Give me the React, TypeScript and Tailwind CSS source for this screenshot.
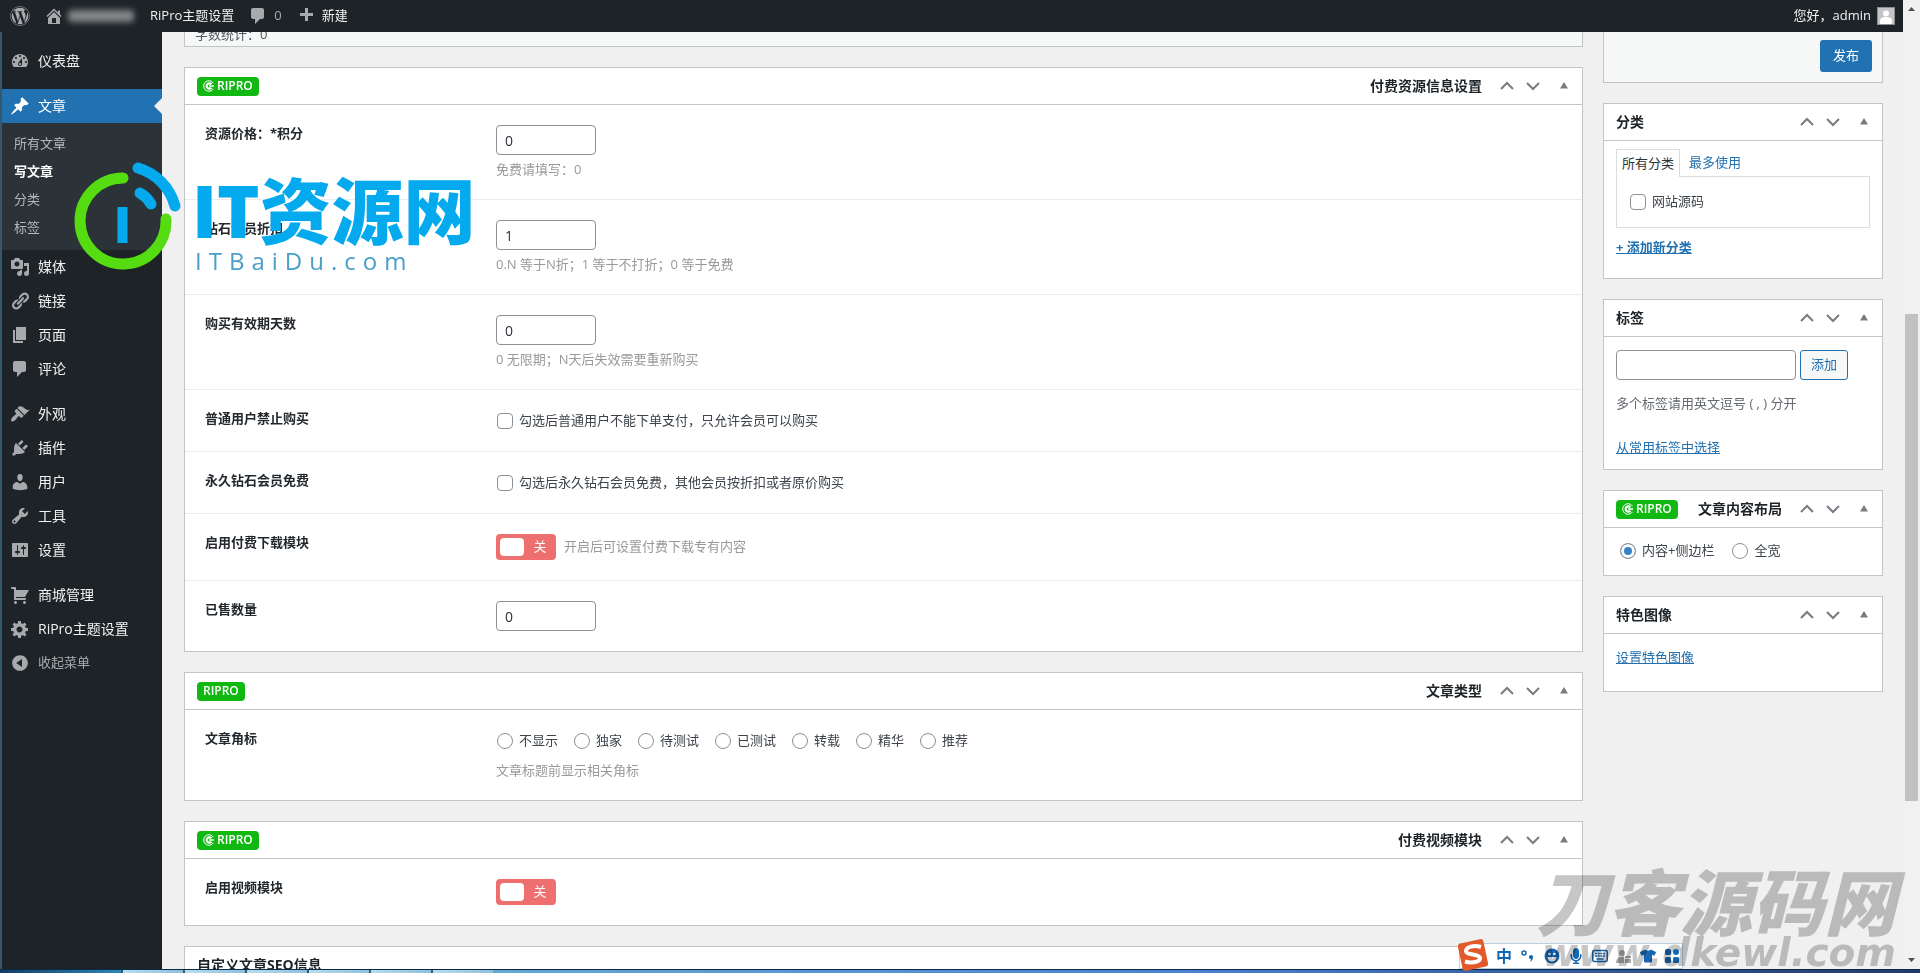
import type { ReactNode } from "react";
import { FaMicrophone, FaTshirt, FaWordpress } from "react-icons/fa";

const icons = {
  dashboard:
    "M3.76 16h12.48c1.1-1.37 1.76-3.11 1.76-5 0-4.42-3.58-8-8-8s-8 3.58-8 8c0 1.89.66 3.63 1.76 5zM10 4c.55 0 1 .45 1 1s-.45 1-1 1-1-.45-1-1 .45-1 1-1zM6 6c.55 0 1 .45 1 1s-.45 1-1 1-1-.45-1-1 .45-1 1-1zm8 0c.55 0 1 .45 1 1s-.45 1-1 1-1-.45-1-1 .45-1 1-1zm-5.37 5.55L12 7v6c0 1.1-.9 2-2 2s-2-.9-2-2c0-.57.24-1.08.63-1.45zM4 10c.55 0 1 .45 1 1s-.45 1-1 1-1-.45-1-1 .45-1 1-1zm12 0c.55 0 1 .45 1 1s-.45 1-1 1-1-.45-1-1 .45-1 1-1zm-5 3c0-.55-.45-1-1-1s-1 .45-1 1 .45 1 1 1 1-.45 1-1z",
  post: "M10.44 3.02l1.82-1.82 6.36 6.35-1.83 1.82c-1.05-.68-2.48-.57-3.41.36l-.75.75c-.92.93-1.04 2.35-.35 3.41l-1.83 1.82-2.41-2.41-2.8 2.79c-.42.42-3.38 2.71-3.8 2.29s1.86-3.39 2.28-3.81l2.79-2.79L4.1 9.36l1.83-1.82c1.05.69 2.48.57 3.4-.36l.75-.75c.93-.92 1.05-2.35.36-3.41z",
  media:
    "M13 11V4c0-.55-.45-1-1-1h-1.67L9 1H5L3.67 3H2c-.55 0-1 .45-1 1v7c0 .55.45 1 1 1h10c.55 0 1-.45 1-1zM7 4.5c1.38 0 2.5 1.12 2.5 2.5S8.38 9.5 7 9.5 4.5 8.38 4.5 7 5.62 4.5 7 4.5zM14 6h5v10.5c0 1.38-1.12 2.5-2.5 2.5S14 17.88 14 16.5s1.12-2.5 2.5-2.5c.17 0 .34.02.5.05V9h-3V6zm-4 8.05V13h2v3.5c0 1.38-1.12 2.5-2.5 2.5S7 17.88 7 16.5 8.12 14 9.5 14c.17 0 .34.02.5.05z",
  links:
    "M17.74 2.76c1.68 1.69 1.68 4.41 0 6.1l-1.53 1.52c-1.12 1.12-2.7 1.47-4.14 1.09l2.62-2.61.76-.77.76-.76c.84-.84.84-2.2 0-3.04-.84-.85-2.2-.85-3.04 0l-.77.76-3.38 3.38c-.37-1.44-.02-3.02 1.1-4.14l1.52-1.53c1.69-1.68 4.42-1.68 6.1 0zM8.59 13.43l5.34-5.34c.42-.42.42-1.1 0-1.52-.44-.43-1.13-.39-1.53 0l-5.33 5.34c-.42.42-.42 1.1 0 1.52.44.43 1.13.39 1.52 0zm-.76 2.29l4.14-4.15c.38 1.44.03 3.02-1.09 4.14l-1.52 1.53c-1.69 1.68-4.41 1.68-6.1 0-1.68-1.68-1.68-4.42 0-6.1l1.53-1.52c1.12-1.12 2.7-1.47 4.14-1.1l-4.14 4.15c-.85.84-.85 2.2 0 3.05.84.84 2.2.84 3.04 0z",
  page: "M6 15V2h10v13H6zm-1 1h8v2H3V5h2v11z",
  comments:
    "M5 2h9c1.1 0 2 .9 2 2v7c0 1.1-.9 2-2 2h-2l-5 5v-5H5c-1.1 0-2-.9-2-2V4c0-1.1.9-2 2-2z",
  appearance:
    "M14.48 11.06L7.41 3.99l1.5-1.5c.5-.56 2.3-.47 3.51.32 1.21.8 1.43 1.28 2.91 2.1 1.18.64 2.45 1.26 4.45.85zm-.71.71L6.7 4.7 4.93 6.47c-.39.39-.39 1.02 0 1.41l1.06 1.06c.39.39.39 1.03 0 1.42-.6.6-1.43 1.11-2.21 1.69-.35.26-.7.53-1.01.84C1.43 14.23.4 16.08 1.4 17.07c.99 1 2.84-.03 4.18-1.36.31-.31.58-.66.85-1.02.57-.78 1.08-1.61 1.69-2.21.39-.39 1.02-.39 1.41 0l1.06 1.06c.39.39 1.02.39 1.41 0z",
  plugins:
    "M13.11 4.36L9.87 7.6 8 5.73l3.24-3.24c.35-.34 1.05-.2 1.56.32.52.51.66 1.21.31 1.55zm-8 1.77l.91-1.12 9.01 9.01-1.19.84c-.71.71-2.63 1.16-3.82 1.16H6.14L4.9 17.26c-.59.59-1.54.59-2.12 0-.59-.58-.59-1.53 0-2.12l1.24-1.24v-3.88c0-1.13.4-3.19 1.09-3.89zm7.26 3.97l3.24-3.24c.34-.35 1.04-.21 1.55.31.52.51.66 1.21.31 1.55l-3.24 3.25z",
  users:
    "M10 9.25c-2.27 0-2.73-3.44-2.73-3.44C7 4.02 7.82 2 9.97 2c2.16 0 2.98 2.02 2.71 3.81 0 0-.41 3.44-2.68 3.44zm0 2.57L12.72 10c2.39 0 4.52 2.33 4.52 4.53v2.49s-3.65 1.13-7.24 1.13c-3.65 0-7.24-1.13-7.24-1.13v-2.49c0-2.25 1.94-4.48 4.47-4.48z",
  tools:
    "M16.68 9.77c-1.34 1.34-3.3 1.67-4.95.99l-5.41 6.52c-.99.99-2.59.99-3.58 0s-.99-2.59 0-3.57l6.52-5.42c-.68-1.65-.35-3.61.99-4.95 1.28-1.28 3.12-1.62 4.72-1.06l-2.89 2.89 2.82 2.82 2.86-2.87c.53 1.58.18 3.39-1.08 4.65zM3.81 16.21c.4.39 1.04.39 1.43 0 .4-.4.4-1.04 0-1.43-.39-.4-1.03-.4-1.43 0-.39.39-.39 1.03 0 1.43z",
  settings:
    "M18 16V4c0-.55-.45-1-1-1H3c-.55 0-1 .45-1 1v12c0 .55.45 1 1 1h14c.55 0 1-.45 1-1zM8 11h1c.55 0 1 .45 1 1s-.45 1-1 1H8v1.5c0 .28-.22.5-.5.5s-.5-.22-.5-.5V13H6c-.55 0-1-.45-1-1s.45-1 1-1h1V5.5c0-.28.22-.5.5-.5s.5.22.5.5V11zm5-2h-1c-.55 0-1-.45-1-1s.45-1 1-1h1V5.5c0-.28.22-.5.5-.5s.5.22.5.5V7h1c.55 0 1 .45 1 1s-.45 1-1 1h-1v5.5c0 .28-.22.5-.5.5s-.5-.22-.5-.5V9z",
  cart: "M6 13h9c.55 0 1 .45 1 1s-.45 1-1 1H5c-.55 0-1-.45-1-1V4H2c-.55 0-1-.45-1-1s.45-1 1-1h3c.55 0 1 .45 1 1v2h13l-4 7H6v1zm-.5 3c.83 0 1.5.67 1.5 1.5S6.33 19 5.5 19 4 18.33 4 17.5 4.67 16 5.5 16zm9 0c.83 0 1.5.67 1.5 1.5s-.67 1.5-1.5 1.5-1.5-.67-1.5-1.5.67-1.5 1.5-1.5z",
  generic:
    "M18 12h-2.18c-.17.7-.44 1.35-.81 1.93l1.54 1.54-2.1 2.1-1.54-1.54c-.58.36-1.23.63-1.91.79V19H8v-2.18c-.68-.16-1.33-.43-1.91-.79l-1.54 1.54-2.12-2.12 1.54-1.54c-.36-.58-.63-1.23-.79-1.91H1V9.03h2.17c.16-.7.44-1.35.8-1.94L2.43 5.55l2.1-2.1 1.54 1.54c.58-.37 1.24-.64 1.93-.81V2h3v2.18c.68.16 1.33.43 1.91.79l1.54-1.54 2.12 2.12-1.54 1.54c.36.59.64 1.24.8 1.94H18V12zm-8.5 1.5c1.66 0 3-1.34 3-3s-1.34-3-3-3-3 1.34-3 3 1.34 3 3 3z",
  collapse:
    "M10 2.16c4.33 0 7.84 3.51 7.84 7.84s-3.51 7.84-7.84 7.84S2.16 14.33 2.16 10 5.71 2.16 10 2.16zm2 11.72V6.12L6.18 9.97z",
  home: "M16 8.5l1.53 1.53-1.06 1.06L10 4.6l-6.47 6.49-1.06-1.06L10 2.5l4 4v-2h2v4zm-6-2.46l6 5.99V18H4v-5.97zM12 17v-5H8v5h4z",
  plus: "M17 7v3h-5v5H9v-5H4V7h5V2h3v5h5z",
};

type IconName = keyof typeof icons;

function Icon({ name, className = "text-[#a7aaad]" }: { name: IconName; className?: string }) {
  return (
    <svg
      aria-hidden="true"
      className={["size-5 shrink-0", className].join(" ")}
      fill="currentColor"
      fillRule="evenodd"
      viewBox="0 0 20 20"
    >
      <path d={icons[name]} />
    </svg>
  );
}

type MenuEntry = { icon: IconName; label: string };

const menuGroups: MenuEntry[][] = [
  [
    { icon: "media", label: "媒体" },
    { icon: "links", label: "链接" },
    { icon: "page", label: "页面" },
    { icon: "comments", label: "评论" },
  ],
  [
    { icon: "appearance", label: "外观" },
    { icon: "plugins", label: "插件" },
    { icon: "users", label: "用户" },
    { icon: "tools", label: "工具" },
    { icon: "settings", label: "设置" },
  ],
  [
    { icon: "cart", label: "商城管理" },
    { icon: "generic", label: "RiPro主题设置" },
  ],
];

const submenu = ["所有文章", "写文章", "分类", "标签"];
const badgeOptions = ["不显示", "独家", "待测试", "已测试", "转载", "精华", "推荐"];

function MenuLink({ icon, label }: MenuEntry) {
  return (
    <a className="flex h-[34px] items-center text-sm text-[#f0f0f1]" href="#">
      <span className="flex w-9 justify-center">
        <Icon name={icon} />
      </span>
      {label}
    </a>
  );
}

function AdminBar() {
  return (
    <header className="flex h-8 shrink-0 items-center justify-between bg-[#1d2327] pe-2 text-[13px] text-[#f0f0f1]">
      <div className="flex items-center">
        <a aria-label="关于WordPress" className="flex w-10 justify-center text-[#a7aaad]" href="#">
          <FaWordpress size={20} />
        </a>
        <a className="flex items-center gap-1 ps-1" href="#">
          <Icon name="home" />
          <span className="h-3 w-[66px] rounded bg-[#85888b] blur-[3px]" />
        </a>
        <a className="ps-4" href="#">
          RiPro主题设置
        </a>
        <a className="flex items-center gap-[6px] ps-[14px] text-[#a7aaad]" href="#">
          <Icon name="comments" />0
        </a>
        <a className="flex items-center gap-[6px] ps-[14px]" href="#">
          <Icon name="plus" />
          新建
        </a>
      </div>
      <a className="flex items-center gap-[6px]" href="#">
        您好，admin
        <svg className="size-[18px] border border-[#8c8f94] bg-[#c3c4c7]" viewBox="0 0 16 16">
          <circle cx="8" cy="5.500" fill="#fff" r="3" />
          <path d="M2 16v-3c0-3 2.500-4 6-4s6 1 6 4v3z" fill="#fff" />
        </svg>
      </a>
    </header>
  );
}

function SideMenu() {
  return (
    <nav className="w-[162px] shrink-0 border-s-2 border-[#36586c] bg-[#1d2327] pt-3">
      <MenuLink icon="dashboard" label="仪表盘" />
      <a
        className="relative mt-[11px] flex h-[34px] items-center bg-[#2271b1] text-sm text-white"
        href="#"
      >
        <span className="flex w-9 justify-center">
          <Icon className="text-white" name="post" />
        </span>
        文章
        <span className="absolute end-0 top-[9px] border-8 border-s-0 border-transparent border-e-[#f0f0f1]" />
      </a>
      <ul className="bg-[#2c3338] pt-[7px] pb-2 text-[13px]">
        {submenu.map((label) => (
          <li key={label}>
            <a
              className={
                label === "写文章"
                  ? "flex h-7 items-center ps-3 font-bold text-white"
                  : "flex h-7 items-center ps-3 text-[#b4b7ba]"
              }
              href="#"
            >
              {label}
            </a>
          </li>
        ))}
      </ul>
      <div className="flex flex-col gap-[11px]">
        {menuGroups.map((group) => (
          <div key={group[0].label}>
            {group.map((entry) => (
              <MenuLink key={entry.label} {...entry} />
            ))}
          </div>
        ))}
      </div>
      <button className="flex h-[34px] items-center text-[13px] text-[#a7aaad]" type="button">
        <span className="flex w-9 justify-center">
          <Icon name="collapse" />
        </span>
        收起菜单
      </button>
    </nav>
  );
}

function RiproBadge({ plain = false }: { plain?: boolean }) {
  return (
    <span className="flex h-[19px] items-center gap-[2px] rounded-sm bg-[#12b812] px-[6px] text-xs font-semibold text-white">
      {plain ? null : (
        <svg className="size-3" fill="none" stroke="#fff" viewBox="0 0 12 12">
          <path d="M10.500 3.200A5.300 5.300 0 1 0 10.500 8.800" />
          <path d="M8.400 4.200A2.700 2.700 0 1 0 8.400 7.800" strokeWidth="2.200" />
          <path d="M6 6h5" strokeWidth="1.500" />
        </svg>
      )}
      RIPRO
    </span>
  );
}

function PanelControls() {
  return (
    <div className="flex text-[#787c82]">
      <button aria-label="上移" className="flex w-[26px] justify-center" type="button">
        <svg className="h-5 w-[14px]" fill="none" stroke="currentColor" strokeWidth="2" viewBox="0 0 14 20">
          <path d="M1 13l6-6 6 6" />
        </svg>
      </button>
      <button aria-label="下移" className="flex w-[26px] justify-center" type="button">
        <svg className="h-5 w-[14px]" fill="none" stroke="currentColor" strokeWidth="2" viewBox="0 0 14 20">
          <path d="M1 7l6 6 6-6" />
        </svg>
      </button>
      <button aria-label="切换面板" className="flex w-9 justify-center" type="button">
        <svg className="h-5 w-2" fill="currentColor" viewBox="0 0 8 20">
          <path d="M0 12.500h8L4 6z" />
        </svg>
      </button>
    </div>
  );
}

type PanelProps = {
  title: string;
  badge?: "icon" | "plain";
  children?: ReactNode;
};

function Panel({ title, badge, children }: PanelProps) {
  return (
    <section className="border border-[#c3c4c7] bg-white">
      <div className="flex h-[37px] items-center border-b border-[#c3c4c7]">
        <h2 className="flex flex-1 items-center justify-between px-3 text-sm font-bold text-[#1d2327]">
          {badge ? <RiproBadge plain={badge === "plain"} /> : null}
          <span>{title}</span>
        </h2>
        <PanelControls />
      </div>
      {children}
    </section>
  );
}

type FieldProps = {
  label: string;
  htmlFor?: string;
  hint?: string;
  children: ReactNode;
};

function Field({ label, htmlFor, hint, children }: FieldProps) {
  return (
    <div className="flex border-b border-[#ececec] p-5 last:border-b-0">
      <label className="w-[291px] shrink-0 text-[13px] leading-[17px] font-bold text-[#23282d]" htmlFor={htmlFor}>
        {label}
      </label>
      <div>
        {children}
        {hint ? <p className="mt-[5px] leading-[19px] text-[#999]">{hint}</p> : null}
      </div>
    </div>
  );
}

function NumberInput({ id, value }: { id: string; value: string }) {
  return (
    <input
      className="block h-[30px] w-[100px] rounded border border-[#8c8f94] bg-white px-2 text-sm text-[#2c3338]"
      defaultValue={value}
      id={id}
      type="text"
    />
  );
}

function CheckOption({ id, label }: { id: string; label: string }) {
  return (
    <label className="flex h-[21px] items-center gap-[6px] ps-px text-[#3c434a]" htmlFor={id}>
      <input className="size-4 appearance-none rounded border border-[#8c8f94] bg-white" id={id} type="checkbox" />
      {label}
    </label>
  );
}

function RadioOption({ name, label, checked = false }: { name: string; label: string; checked?: boolean }) {
  return (
    <label className="flex h-[22px] items-center gap-[6px] text-[#3c434a]">
      <input
        className="size-4 appearance-none rounded-full border border-[#8c8f94] bg-white checked:bg-[#3582c4] checked:shadow-[inset_0_0_0_3px_#fff]"
        defaultChecked={checked}
        name={name}
        type="radio"
      />
      {label}
    </label>
  );
}

function Switch({ id, hint }: { id: string; hint?: string }) {
  return (
    <label className="flex items-center gap-2 text-[#999]">
      <input className="sr-only" id={id} type="checkbox" />
      <span className="flex h-[26px] w-[60px] items-center rounded bg-[#ed6f6f] ps-1 text-white">
        <span className="h-[18px] w-6 rounded bg-white" />
        <span className="flex-1 text-center">关</span>
      </span>
      {hint}
    </label>
  );
}

function MainColumn() {
  return (
    <main className="flex min-w-0 flex-1 flex-col gap-5">
      <div className="border border-t-0 border-[#c3c4c7] bg-[#f6f7f7] px-[10px] pb-[2px] leading-5 text-[#50575e]">
        字数统计：0
      </div>

      <Panel badge="icon" title="付费资源信息设置">
        <Field hint="免费请填写：0" htmlFor="price" label="资源价格：*积分">
          <NumberInput id="price" value="0" />
        </Field>
        <Field hint="0.N 等于N折；1 等于不打折；0 等于免费" htmlFor="rate" label="钻石会员折扣">
          <NumberInput id="rate" value="1" />
        </Field>
        <Field hint="0 无限期；N天后失效需要重新购买" htmlFor="expire" label="购买有效期天数">
          <NumberInput id="expire" value="0" />
        </Field>
        <Field htmlFor="no-buy" label="普通用户禁止购买">
          <CheckOption id="no-buy" label="勾选后普通用户不能下单支付，只允许会员可以购买" />
        </Field>
        <Field htmlFor="vip-free" label="永久钻石会员免费">
          <CheckOption id="vip-free" label="勾选后永久钻石会员免费，其他会员按折扣或者原价购买" />
        </Field>
        <Field htmlFor="download" label="启用付费下载模块">
          <Switch hint="开启后可设置付费下载专有内容" id="download" />
        </Field>
        <Field htmlFor="sold" label="已售数量">
          <NumberInput id="sold" value="0" />
        </Field>
      </Panel>

      <Panel badge="plain" title="文章类型">
        <Field hint="文章标题前显示相关角标" label="文章角标">
          <div className="flex gap-4 ps-px pb-1">
            {badgeOptions.map((label) => (
              <RadioOption key={label} label={label} name="corner" />
            ))}
          </div>
        </Field>
      </Panel>

      <Panel badge="icon" title="付费视频模块">
        <Field htmlFor="video" label="启用视频模块">
          <Switch id="video" />
        </Field>
      </Panel>

      <Panel title="自定义文章SEO信息" />
    </main>
  );
}

function SideColumn() {
  return (
    <aside className="flex w-[280px] shrink-0 flex-col gap-5">
      <div className="flex justify-end border border-t-0 border-[#c3c4c7] bg-[#f6f7f7] px-[10px] pt-4 pb-[10px]">
        <button className="h-8 rounded-[3px] bg-[#2271b1] px-[13px] text-white" type="button">
          发布
        </button>
      </div>

      <Panel title="分类">
        <div className="px-3 pt-2 pb-[21px]">
          <div className="flex">
            <button
              className="relative z-10 -mb-px h-7 border border-b-0 border-[#dcdcde] bg-white px-[5px] text-[#2c3338]"
              type="button"
            >
              所有分类
            </button>
            <button className="px-[9px] text-[#2271b1]" type="button">
              最多使用
            </button>
          </div>
          <div className="flex h-[52px] items-center border border-[#dcdcde] px-3">
            <CheckOption id="cat-source" label="网站源码" />
          </div>
          <a className="mt-[10px] block leading-[19px] font-bold text-[#2271b1] underline" href="#">
            + 添加新分类
          </a>
        </div>
      </Panel>

      <Panel title="标签">
        <div className="px-3 pt-[13px] pb-3">
          <div className="flex gap-1">
            <input
              aria-label="添加标签"
              className="h-[30px] w-[180px] rounded border border-[#8c8f94] bg-white px-2"
              type="text"
            />
            <button
              className="h-[30px] rounded-[3px] border border-[#2271b1] bg-[#f6f7f7] px-[10px] text-[#2271b1]"
              type="button"
            >
              添加
            </button>
          </div>
          <p className="mt-[14px] leading-[19px] text-[#646970]">多个标签请用英文逗号 ( , ) 分开</p>
          <a className="mt-[25px] block leading-[19px] text-[#2271b1] underline" href="#">
            从常用标签中选择
          </a>
        </div>
      </Panel>

      <Panel badge="icon" title="文章内容布局">
        <div className="flex gap-[18px] px-4 pt-3 pb-[13px]">
          <RadioOption checked label="内容+侧边栏" name="layout" />
          <RadioOption label="全宽" name="layout" />
        </div>
      </Panel>

      <Panel title="特色图像">
        <div className="px-3 pt-[14px] pb-6">
          <a className="block leading-[19px] text-[#2271b1] underline" href="#">
            设置特色图像
          </a>
        </div>
      </Panel>
    </aside>
  );
}

function ScrollBar() {
  return (
    <div className="flex w-[17px] shrink-0 flex-col items-center bg-[#f1f1f1] py-[7px]">
      <svg className="h-1 w-[7px]" viewBox="0 0 7 4">
        <path d="M0 4h7L3.500 0z" fill="#505050" />
      </svg>
      <div className="flex-[303]" />
      <div className="w-[13px] flex-[487] bg-[#c1c1c1]" />
      <div className="flex-[157]" />
      <svg className="h-1 w-[7px]" viewBox="0 0 7 4">
        <path d="M0 0h7L3.500 4z" fill="#505050" />
      </svg>
    </div>
  );
}

function TaskBar() {
  return (
    <div className="flex h-1 shrink-0 border-t border-[#0b2a45]">
      <div className="w-[121px] bg-linear-to-r from-[#123f66] to-[#2f86b8]" />
      {[0, 1, 2, 3, 4, 5].map((tab) => (
        <div className="w-[62px] border-s-2 border-[#2b5f7c] bg-linear-to-r from-[#b9dcec] to-[#8fc0da]" key={tab} />
      ))}
      <div className="flex-1 bg-linear-to-r from-[#63a9d2] via-[#4a80cf] to-[#22396b]" />
    </div>
  );
}

function SiteLogo() {
  return (
    <div className="pointer-events-none absolute top-[160px] left-[72px] flex">
      <svg className="size-[112px]" fill="none" strokeLinecap="round" viewBox="72 160 112 112">
        <path d="M123 178A43 43 0 1 0 166 219" stroke="#55dd12" strokeWidth="11" />
        <path d="M138 168A54 54 0 0 1 175 206" stroke="#05a9ee" strokeWidth="11" />
        <path d="M140 193Q147 197 151 204" stroke="#05a9ee" strokeWidth="11" />
        <path d="M122.500 207v36" stroke="#05a9ee" strokeLinecap="butt" strokeWidth="10" />
      </svg>
      <div className="ps-2 pt-[13px] whitespace-nowrap">
        <div className="text-[72px] leading-[74px] font-black text-[#05a9ee]">IT资源网</div>
        <div className="ps-[3px] text-2xl leading-7 tracking-[7px] text-[#4a9fc8]">ITBaiDu.com</div>
      </div>
    </div>
  );
}

function InputMethodBar() {
  return (
    <div className="absolute right-[237px] bottom-1 flex h-[26px] items-center gap-2 border border-[#b9cfe4] bg-white ps-9 pe-[2px] text-[#1467b3]">
      <svg className="absolute -start-[3px] -top-[5px] size-8" viewBox="0 0 32 32">
        <rect fill="#e2592a" height="28" rx="3" transform="rotate(-12 16 16)" width="26" x="3" y="2" />
        <path
          d="M24 8C17 5.500 8.500 8 9 12.500c.5 4 13.500 2 14 6.500.4 4-8 5.500-15 3.500"
          fill="none"
          stroke="#fff"
          strokeWidth="4"
        />
      </svg>
      <span className="text-base leading-4 font-bold">中</span>
      <svg className="size-4" viewBox="0 0 16 16">
        <circle cx="4" cy="5" fill="none" r="2" stroke="currentColor" strokeWidth="1.500" />
        <path d="M11 7a2 2 0 0 1 2 2c0 2-1 4-3 5 .6-1 1-2 .8-3A2 2 0 0 1 11 7z" fill="currentColor" />
      </svg>
      <svg className="size-4" viewBox="0 0 16 16">
        <circle cx="8" cy="8" fill="currentColor" r="7.500" />
        <circle cx="5.500" cy="6" fill="#fff" r="1.300" />
        <circle cx="10.500" cy="6" fill="#fff" r="1.300" />
        <path d="M3.500 9h9a4.500 4.500 0 0 1-9 0z" fill="#fff" />
      </svg>
      <FaMicrophone size={16} />
      <svg className="size-4" fill="none" stroke="currentColor" viewBox="0 0 16 16">
        <rect height="11" rx="1.500" strokeWidth="1.500" width="14.500" x="0.750" y="2.500" />
        <path d="M3 5.500h10M3 8h10" strokeDasharray="2 0.700" strokeWidth="1.600" />
        <path d="M4.500 11h7" strokeWidth="1.500" />
      </svg>
      <svg className="size-4 text-[#a9a9a9]" fill="currentColor" viewBox="0 0 16 16">
        <circle cx="6" cy="5" r="3" />
        <path d="M0 15c0-4 2-6 6-6h2v6zM9 8h6v2H9zM9 11h6v4H9z" />
      </svg>
      <FaTshirt size={16} />
      <svg className="size-4" fill="currentColor" viewBox="0 0 16 16">
        <rect height="6" rx="1.500" width="6" x="1" y="1" />
        <circle cx="12" cy="4" r="3" />
        <rect height="6" rx="1.500" width="6" x="1" y="9" />
        <rect height="6" rx="1.500" width="6" x="9" y="9" />
      </svg>
    </div>
  );
}

function SourceMark() {
  return (
    <div className="pointer-events-none absolute right-6 bottom-0 flex flex-col items-end whitespace-nowrap text-[#c6c6c6] italic mix-blend-multiply">
      <div className="text-[72px] leading-[62px] font-black">刀客源码网</div>
      <div className='font-["DejaVu_Sans",sans-serif] text-[39px] leading-10 font-bold'>www.dkewl.com</div>
    </div>
  );
}

export default function App() {
  return (
    <div
      className='relative flex h-screen flex-col overflow-hidden bg-[#f0f0f1] font-["Open_Sans","Noto_Sans_CJK_SC",sans-serif] text-[13px] text-[#3c434a]'
      lang="zh-CN"
    >
      <div className="flex min-h-0 flex-1">
        <div className="flex min-w-0 flex-1 flex-col">
          <AdminBar />
          <div className="flex min-h-0 flex-1 overflow-hidden">
            <SideMenu />
            {/* scrolled down, so the first boxes are cut by the admin bar */}
            <div className="-mt-2 flex min-w-0 flex-1 items-start gap-5 ps-[22px] pe-5">
              <MainColumn />
              <SideColumn />
            </div>
          </div>
        </div>
        <ScrollBar />
      </div>
      <TaskBar />
      <SiteLogo />
      <InputMethodBar />
      <SourceMark />
    </div>
  );
}
